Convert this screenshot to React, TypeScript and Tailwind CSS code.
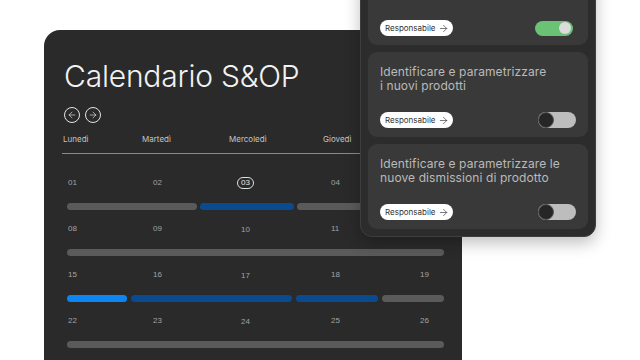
import { ArrowLeft, ArrowRight } from "lucide-react";

const font = { fontFamily: "Inter, 'Liberation Sans', sans-serif" };

const weekdays = ["Lunedì", "Martedì", "Mercoledì", "Giovedì"];

const weeks = [
  { days: ["01", "02", "03", "04", ""], gap: "gap-[3px]", bars: [["w-[130px]", "bg-[#5a5a5a]"], ["w-[94px]", "bg-[#0a4a8e]"], ["flex-1", "bg-[#5a5a5a]"]] },
  { days: ["08", "09", "10", "11", ""], gap: "gap-[3px]", bars: [["flex-1", "bg-[#5a5a5a]"]] },
  { days: ["15", "16", "17", "18", "19"], gap: "gap-[4px]", bars: [["w-[60px]", "bg-[#0b86f3]"], ["w-[161px]", "bg-[#0a4a8e]"], ["w-[82px]", "bg-[#0a4a8e]"], ["flex-1", "bg-[#5a5a5a]"]] },
  { days: ["22", "23", "24", "25", "26"], gap: "gap-[3px]", bars: [["flex-1", "bg-[#5a5a5a]"]] },
  { days: ["29", "30", "", "", ""], gap: "gap-[3px]", bars: [] },
];

const tasks = [
  { title: ["Validare il piano della domanda"], on: true },
  { title: ["Identificare e parametrizzare", "i nuovi prodotti"], on: false },
  { title: ["Identificare e parametrizzare le", "nuove dismissioni di prodotto"], on: false },
];

function Toggle({ on }: { on: boolean }) {
  if (on) {
    return (
      <div className="mr-[15px] flex h-[15px] w-[38px] items-center justify-end rounded-full bg-[#6cc274] px-[2px]">
        <div className="h-[12px] w-[12px] rounded-full bg-[#dcdcdc]" />
      </div>
    );
  }
  return (
    <div className="mr-[12px] flex h-[16px] w-[38px] items-center rounded-full bg-[#bdbdbd]">
      <div className="h-[16px] w-[16px] rounded-full border border-[#555] bg-[#262626]" />
    </div>
  );
}

export default function App() {
  return (
    <div className="relative h-[360px] w-[640px] overflow-hidden bg-white" style={font}>
      <div className="ml-[44px] mt-[30px] h-[340px] w-[418px] rounded-t-[16px] bg-[#2a2a2a] pl-[18px] pr-[18px] pt-[28px]">
        <h1 className="pl-[2px] text-[30px] font-light leading-[36px] tracking-[-0.2px] text-[#f2f2f2]">Calendario S&amp;OP</h1>
        <div className="mt-[13px] flex gap-[5px] pl-[2px]">
          <div className="flex h-[16px] w-[16px] items-center justify-center rounded-full border border-[#e5e5e5] text-[#e5e5e5]">
            <ArrowLeft size={10} strokeWidth={1.6} />
          </div>
          <div className="flex h-[16px] w-[16px] items-center justify-center rounded-full border border-[#e5e5e5] text-[#e5e5e5]">
            <ArrowRight size={10} strokeWidth={1.6} />
          </div>
        </div>
        <div className="mt-[10px] grid grid-cols-[79px_87px_94px_1fr] pl-[1px] text-[8px] leading-[12px] text-[#c4c4c4]">
          {weekdays.map((d) => (
            <span key={d}>{d}</span>
          ))}
        </div>
        <div className="mt-[8px] h-px bg-[#8a8a8a]" />
        <div className="mt-[23px] flex flex-col gap-[13px]">
          {weeks.map((w, i) => (
            <div key={i} className="flex flex-col gap-[14px]">
              <div className="grid grid-cols-[85px_88px_90px_89px_1fr] pl-[6px] text-[8px] leading-[12px] text-[#a3a3a3]" style={{ fontFamily: "'Liberation Sans', Arial, sans-serif" }}>
                {w.days.map((d, j) =>
                  d === "03" ? (
                    <span key={j} className="-ml-[4px] w-fit rounded-full border border-[#e0e0e0] px-[3px] leading-[10px] text-[#e8e8e8]">
                      {d}
                    </span>
                  ) : (
                    <span key={j} className={j === 2 ? "translate-y-[1px]" : ""}>{d}</span>
                  )
                )}
              </div>
              {w.bars.length > 0 && (
                <div className={`ml-[5px] flex ${w.gap}`}>
                  {w.bars.map(([width, color], k) => (
                    <div key={k} className={`h-[7px] rounded-full ${width} ${color}`} />
                  ))}
                </div>
              )}
            </div>
          ))}
        </div>
      </div>

      <div className="absolute left-[360px] top-[-48px] flex w-[236px] flex-col gap-[7px] rounded-[12px] border border-[#3e3e3e] bg-[#2c2c2c] p-[7px] shadow-[0_6px_16px_rgba(0,0,0,0.25)]">
        {tasks.map((t, i) => (
          <div key={i} className="flex h-[85px] flex-col justify-between rounded-[9px] bg-[#393939] pb-[9px] pl-[12px] pt-[13px]">
            <div className="text-[12px] leading-[14px] tracking-[0.1px] text-[#bababa]">
              {t.title.map((l) => (
                <div key={l}>{l}</div>
              ))}
            </div>
            <div className="flex items-center justify-between">
              <div className="flex h-[16px] w-[73px] items-center justify-between rounded-full bg-white pl-[5px] pr-[4px] text-[8px] text-[#333]">
                <span>Responsabile</span>
                <ArrowRight size={11} strokeWidth={1.4} />
              </div>
              <Toggle on={t.on} />
            </div>
          </div>
        ))}
      </div>
    </div>
  );
}
